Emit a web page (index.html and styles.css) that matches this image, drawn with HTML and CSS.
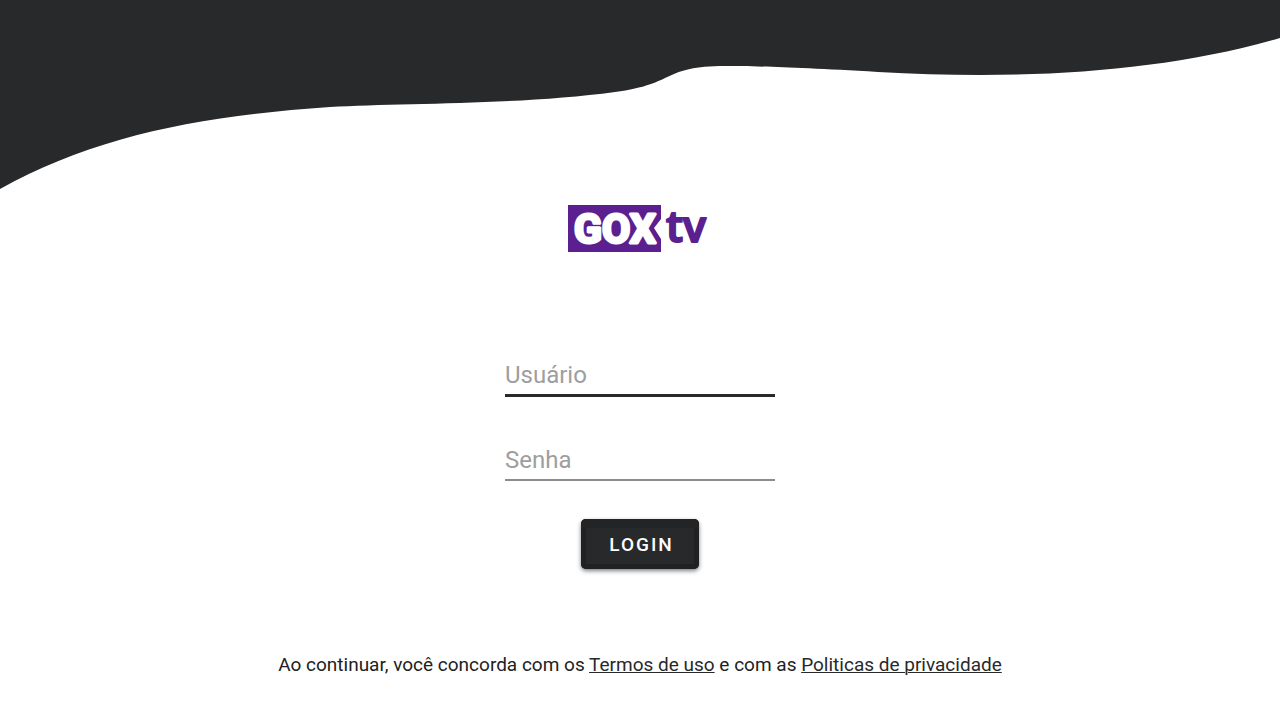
FILE: index.html
```html
<!DOCTYPE html>
<html lang="pt-BR">
<head>
    <meta charset="UTF-8">
    <meta name="viewport" content="width=device-width, initial-scale=1.0">
    <title>GOX tv - Login</title>
    <link rel="stylesheet" href="styles.css">
</head>
<body>
    <svg class="wave" viewBox="0 0 1280 190" preserveAspectRatio="none" aria-hidden="true">
        <path d="M0 0H1280V38C1160 73 1020 80 878 72C790 67 750 66 725 66C662 66 677 84 615 92C520 105 400 103 330 107C200 116 95 136 0 189Z"/>
    </svg>

    <main class="login">
        <svg class="logo" viewBox="0 -8 144 64" role="img" aria-label="GOX tv">
            <path class="logo-box" d="M0 0H93V14L86 23L93 34V47H0Z"/>
            <text class="logo-gox" x="6" y="38">GOX</text>
            <text class="logo-tv" x="98" y="37">tv</text>
        </svg>

        <form class="login-form" onsubmit="return false">
            <input class="field field-active" type="text" placeholder="Usuário" aria-label="Usuário">
            <input class="field" type="password" placeholder="Senha" aria-label="Senha">
            <button class="login-button" type="submit">LOGIN</button>
        </form>

        <p class="terms">Ao continuar, você concorda com os <a href="#">Termos de uso</a> e com as <a href="#">Politicas de privacidade</a></p>
    </main>
</body>
</html>
```
FILE: styles.css
```css
* {
    box-sizing: border-box;
}

body {
    margin: 0;
    background: #fff;
    color: #212121;
    font-family: Roboto, sans-serif;
}

/* Onda do topo */
.wave {
    display: block;
    width: 100%;
    height: 190px;
    fill: #28292b;
}

.login {
    display: flex;
    flex-direction: column;
    align-items: center;
    padding: 7px 16px 0;
}

/* Logo */
.logo {
    width: 144px;
    height: 64px;
    overflow: visible;
}

.logo-box {
    fill: #5b1f8f;
}

.logo-gox {
    fill: #fff;
    stroke: #fff;
    stroke-width: 3px;
    stroke-linejoin: round;
    font-size: 41px;
    font-weight: 700;
}

.logo-tv {
    fill: #5b1f8f;
    stroke: #5b1f8f;
    stroke-width: 2px;
    stroke-linejoin: round;
    font-family: "Open Sans", sans-serif;
    font-size: 43px;
    font-weight: 600;
}

/* Formulário */
.login-form {
    display: flex;
    flex-direction: column;
    align-items: center;
    width: 100%;
    max-width: 270px;
    margin-top: 94px;
}

.field {
    width: 100%;
    height: 42px;
    margin-bottom: 42px;
    padding: 1px 0 0;
    border: 0;
    border-bottom: 2px solid #8c8c8c;
    border-radius: 0;
    background: transparent;
    color: #212121;
    font: 24px Roboto, sans-serif;
    outline: none;
}

.field-active {
    padding: 0;
    border-bottom: 3px solid #28292b;
}

.field::placeholder {
    color: #9e9e9e;
    opacity: 1;
}

.login-button {
    height: 50px;
    margin-top: -4px;
    padding: 0 25px 0 28px;
    border: 0;
    border-radius: 5px;
    background: #28292b;
    box-shadow: inset 0 9px #232426, inset 0 0 0 5px #202122, 0 2px 4px rgba(0, 0, 0, 0.5);
    color: #fff;
    font: 500 19px Roboto, sans-serif;
    letter-spacing: 2px;
    cursor: pointer;
}

/* Termos */
.terms {
    margin: 82px 0 0;
    font-size: 19px;
    line-height: 28px;
    text-align: center;
}

.terms a {
    color: #28292b;
    text-decoration-thickness: 1px;
}
```
